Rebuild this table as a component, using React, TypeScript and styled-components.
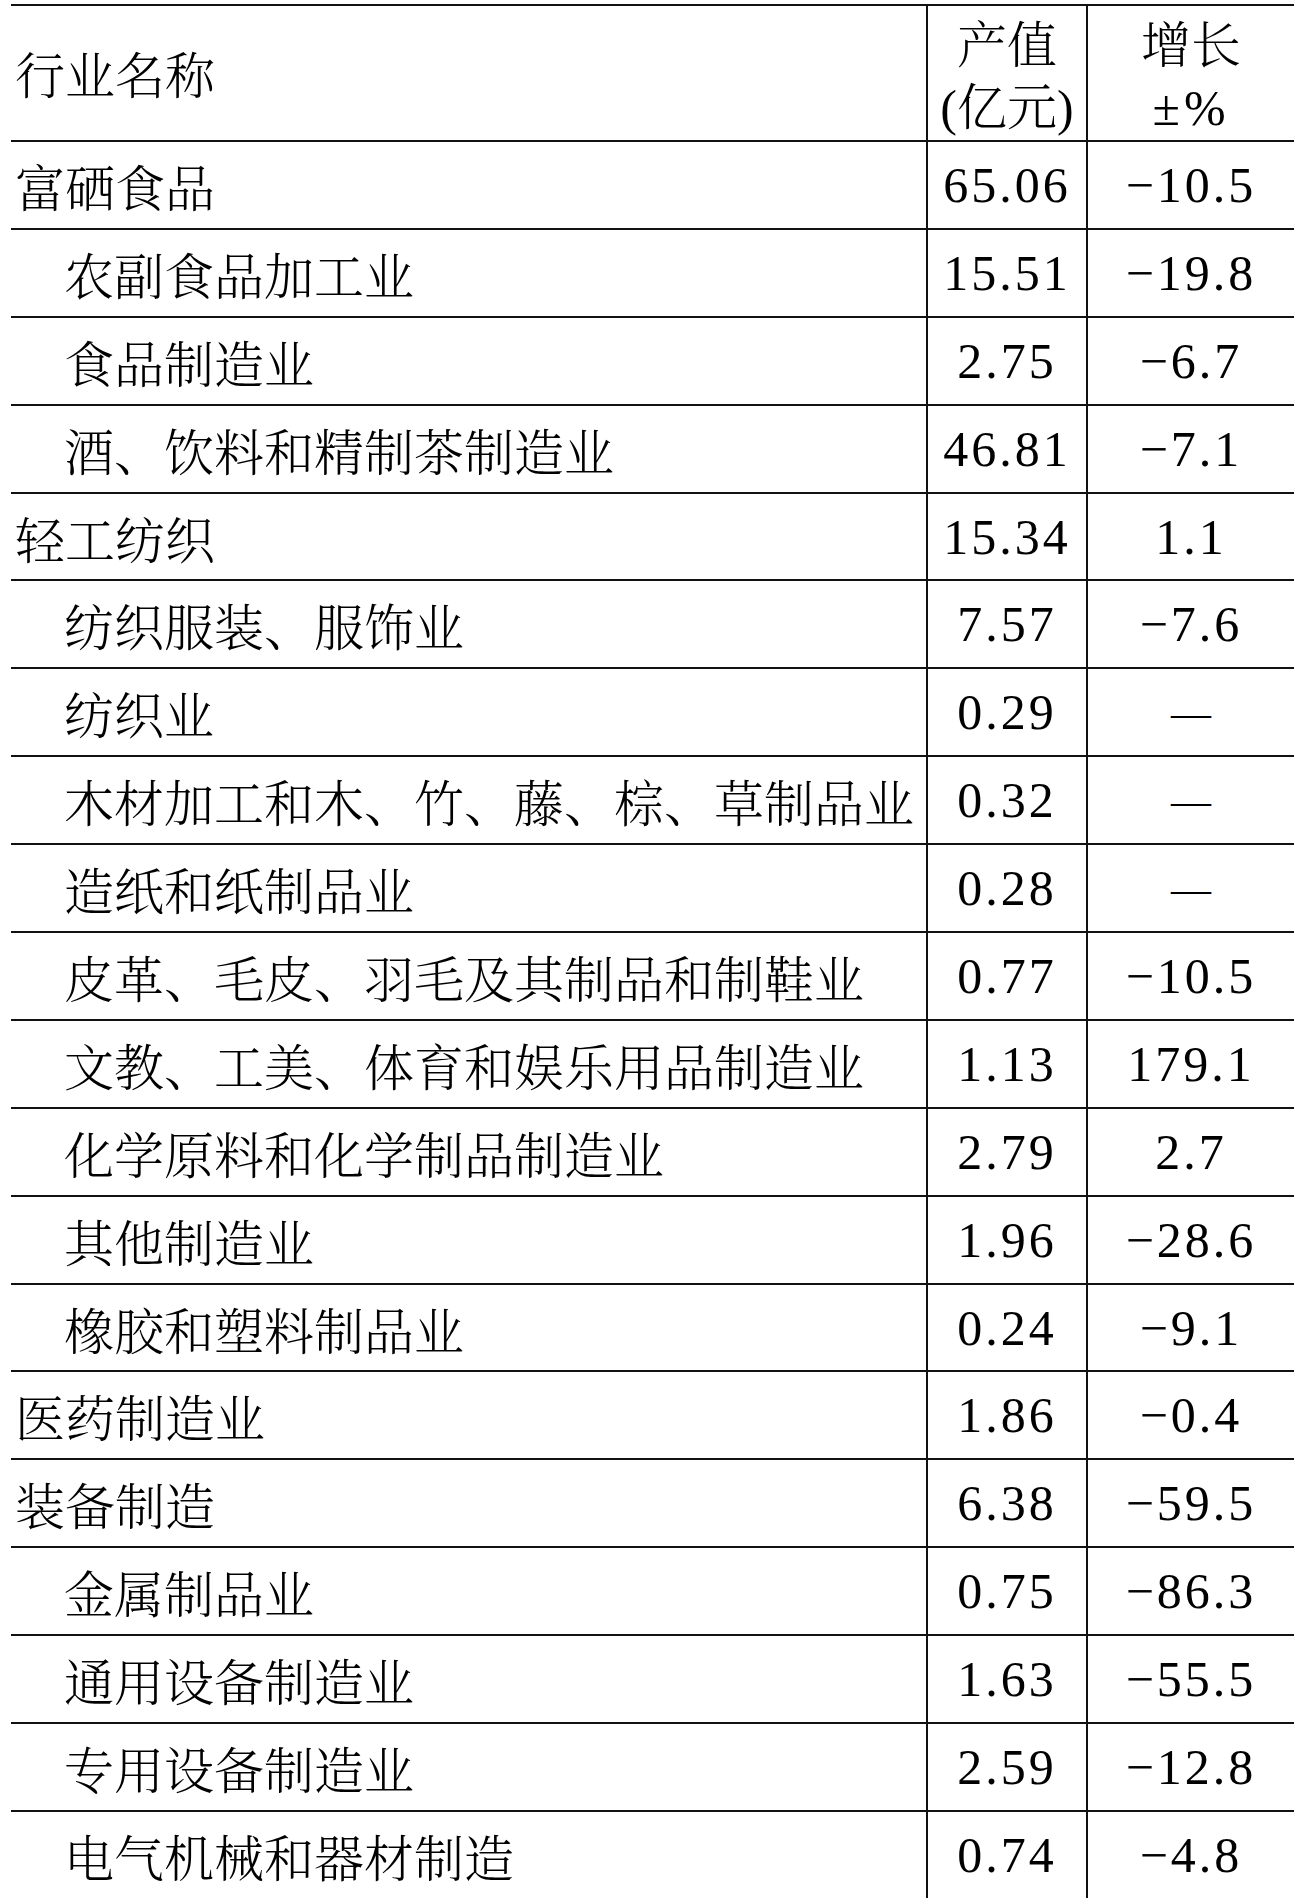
import { FC } from "react"
import styled, { createGlobalStyle } from "styled-components"

const GlobalStyle = createGlobalStyle`
  html, body {
    margin: 0;
    padding: 0;
    background: #fff;
  }
  body {
    font-family: "Liberation Serif", "Noto Serif CJK SC", "Noto Sans CJK SC", serif;
    color: #000;
  }
`

type RowType = {
  name: string
  value: string
  growth: string
  sub?: boolean
}

const rows: RowType[] = [
  { name: "富硒食品", value: "65.06", growth: "−10.5" },
  { name: "农副食品加工业", value: "15.51", growth: "−19.8", sub: true },
  { name: "食品制造业", value: "2.75", growth: "−6.7", sub: true },
  { name: "酒、饮料和精制茶制造业", value: "46.81", growth: "−7.1", sub: true },
  { name: "轻工纺织", value: "15.34", growth: "1.1" },
  { name: "纺织服装、服饰业", value: "7.57", growth: "−7.6", sub: true },
  { name: "纺织业", value: "0.29", growth: "—", sub: true },
  { name: "木材加工和木、竹、藤、棕、草制品业", value: "0.32", growth: "—", sub: true },
  { name: "造纸和纸制品业", value: "0.28", growth: "—", sub: true },
  { name: "皮革、毛皮、羽毛及其制品和制鞋业", value: "0.77", growth: "−10.5", sub: true },
  { name: "文教、工美、体育和娱乐用品制造业", value: "1.13", growth: "179.1", sub: true },
  { name: "化学原料和化学制品制造业", value: "2.79", growth: "2.7", sub: true },
  { name: "其他制造业", value: "1.96", growth: "−28.6", sub: true },
  { name: "橡胶和塑料制品业", value: "0.24", growth: "−9.1", sub: true },
  { name: "医药制造业", value: "1.86", growth: "−0.4" },
  { name: "装备制造", value: "6.38", growth: "−59.5" },
  { name: "金属制品业", value: "0.75", growth: "−86.3", sub: true },
  { name: "通用设备制造业", value: "1.63", growth: "−55.5", sub: true },
  { name: "专用设备制造业", value: "2.59", growth: "−12.8", sub: true },
  { name: "电气机械和器材制造", value: "0.74", growth: "−4.8", sub: true },
]

const Page = styled.div`
  padding: 4px 0 0 11px;
  overflow: hidden;
`

const Table = styled.div`
  display: grid;
  grid-template-columns: 915px 160px 208px;
  grid-template-rows: 136px;
  grid-auto-rows: 87.9px;
  border-top: 2px solid #111;
  width: 1283px;
`

const Row = styled.div`
  display: contents;
`

const HeadCell = styled.div<{ $center?: boolean; $divider?: boolean }>`
  box-sizing: border-box;
  display: flex;
  flex-direction: column;
  justify-content: center;
  align-items: ${(p) => (p.$center ? "center" : "flex-start")};
  padding: 8px 0 0 ${(p) => (p.$center ? "0" : "4px")};
  border-bottom: 2px solid #111;
  border-left: ${(p) => (p.$divider ? "2px solid #111" : "none")};
  font-size: 50px;
  line-height: 62px;
  font-weight: 300;
`

const Sign = styled.span`
  letter-spacing: 4px;
`

const Cell = styled.div<{ $indent?: boolean; $num?: boolean; $divider?: boolean }>`
  box-sizing: border-box;
  display: flex;
  align-items: center;
  justify-content: ${(p) => (p.$num ? "center" : "flex-start")};
  padding-left: ${(p) => (p.$num ? "0" : p.$indent ? "53px" : "4px")};
  border-bottom: 2px solid #111;
  border-left: ${(p) => (p.$divider ? "2px solid #111" : "none")};
  font-size: 50px;
  font-weight: 300;
  letter-spacing: ${(p) => (p.$num ? "3px" : "0")};
  white-space: nowrap;
  overflow: hidden;
`

const Dash = styled.span`
  font-size: 40px;
  letter-spacing: 0;
`

const App: FC = () => {
  return (
    <>
      <GlobalStyle />
      <Page>
        <Table>
          <Row>
            <HeadCell>行业名称</HeadCell>
            <HeadCell $center $divider>
              <span>产值</span>
              <span>(亿元)</span>
            </HeadCell>
            <HeadCell $center $divider>
              <span>增长</span>
              <Sign>±%</Sign>
            </HeadCell>
          </Row>
          {rows.map((row) => (
            <Row key={row.name}>
              <Cell $indent={row.sub}>{row.name}</Cell>
              <Cell $num $divider>{row.value}</Cell>
              <Cell $num $divider>
                {row.growth === "—" ? <Dash>—</Dash> : row.growth}
              </Cell>
            </Row>
          ))}
        </Table>
      </Page>
    </>
  )
}

export default App
